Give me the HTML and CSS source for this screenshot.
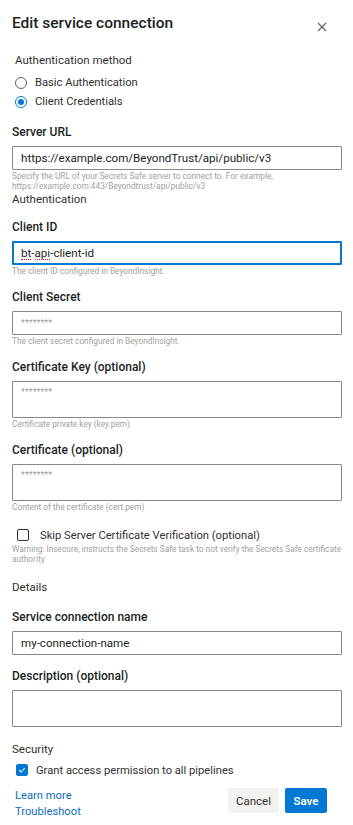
FILE: index.html
```html
<!DOCTYPE html>
<html>
<head>
<meta charset="utf-8">
<link rel="stylesheet" href="styles.css">
</head>
<body>
<div class="panel">
  <div class="header">
    <h1 class="title">Edit service connection</h1>
    <button class="close" aria-label="Close">
      <svg width="10" height="10" viewBox="0 0 10 10"><path d="M1 1L9 9M9 1L1 9" stroke="#605e5c" stroke-width="1.1" fill="none"/></svg>
    </button>
  </div>

  <div class="method">
    <div class="method-title">Authentication method</div>
    <label class="radio-row"><span class="radio"></span>Basic Authentication</label>
    <label class="radio-row"><span class="radio checked"></span>Client Credentials</label>
  </div>

  <div class="field first">
    <div class="label">Server URL</div>
    <div class="input">https://example.com/BeyondTrust/api/public/v3</div>
    <div class="help">Specify the URL of your Secrets Safe server to connect to. For example, https://example.com:443/Beyondtrust/api/public/v3</div>
  </div>

  <div class="section">Authentication</div>

  <div class="field after-section">
    <div class="label">Client ID</div>
    <div class="input focused"><span class="spell">bt</span>-<span class="spell">api</span>-client-id</div>
    <div class="help">The client ID configured in BeyondInsight.</div>
  </div>

  <div class="field">
    <div class="label">Client Secret</div>
    <div class="input placeholder">********</div>
    <div class="help">The client secret configured in BeyondInsight.</div>
  </div>

  <div class="field">
    <div class="label">Certificate Key (optional)</div>
    <div class="input area placeholder">********</div>
    <div class="help">Certificate private key (key.pem)</div>
  </div>

  <div class="field">
    <div class="label">Certificate (optional)</div>
    <div class="input area placeholder">********</div>
    <div class="help">Content of the certificate (cert.pem)</div>
  </div>

  <label class="check-row skip"><span class="checkbox"></span>Skip Server Certificate Verification (optional)</label>
  <div class="help warn">Warning: Insecure, instructs the Secrets Safe task to not verify the Secrets Safe certificate authority</div>

  <div class="section details">Details</div>

  <div class="field tight">
    <div class="label">Service connection name</div>
    <div class="input">my-connection-name</div>
  </div>

  <div class="field desc">
    <div class="label">Description (optional)</div>
    <div class="input area"></div>
  </div>

  <div class="section security">Security</div>
  <label class="check-row grant"><span class="checkbox on"><svg width="8" height="8" viewBox="0 0 8 8"><path d="M1.2 4.2L3.1 6L6.8 2" stroke="#fff" stroke-width="1.1" fill="none"/></svg></span>Grant access permission to all pipelines</label>

  <div class="footer">
    <div class="links">
      <a class="link">Learn more</a>
      <a class="link">Troubleshoot</a>
    </div>
    <div class="buttons">
      <button class="btn cancel">Cancel</button>
      <button class="btn save">Save</button>
    </div>
  </div>
</div>
</body>
</html>
```

FILE: styles.css
```css
* { box-sizing: border-box; }
html, body { margin: 0; padding: 0; background: #fff; }
body {
  font-family: Roboto, "Noto Sans", sans-serif;
  color: #323130;
  font-size: 12px;
}
.panel { padding: 10px 11px 0 12px; width: 353px; }
.header { display: flex; justify-content: space-between; align-items: center; height: 26px; }
.title { margin: 0; font-size: 15.5px; font-weight: 500; color: #201f1e; }
.close { border: 0; background: none; padding: 0; margin: 8px 14px 0 0; width: 12px; height: 12px; display: flex; align-items: center; justify-content: center; }

.method { margin-top: 16px; padding-left: 3px; }
.method-title { font-size: 11.5px; line-height: 16px; }
.radio-row { display: flex; align-items: center; height: 19px; font-size: 11.2px; color: #323130; }
.radio-row:first-of-type { margin-top: 5px; }
.radio { width: 12px; height: 12px; border-radius: 50%; border: 1px solid #605e5c; margin: 0 8px 0 0; position: relative; }
.radio.checked { border-color: #0078d4; }
.radio.checked::after { content: ""; position: absolute; left: 2px; top: 2px; width: 6px; height: 6px; border-radius: 50%; background: #0078d4; }

.field { margin-top: 12px; }
.field.first { margin-top: 12px; }
.field.after-section { margin-top: 11px; }
.label { font-size: 12px; font-weight: 500; line-height: 18px; color: #201f1e; }
.input {
  margin-top: 5px;
  height: 24px;
  width: 330px;
  border: 1px solid #8a8886;
  border-radius: 1px;
  padding: 0 8px;
  font-size: 11.6px;
  line-height: 22px;
  color: #201f1e;
}
.input.focused { border: 2px solid #0078d4; padding: 0 7px; line-height: 20px; }
.input.area { height: 37px; line-height: 20px; }
.input.placeholder { color: #a19f9d; font-size: 9px; }
.spell { border-bottom: 1px dotted #e81123; line-height: 12px; display: inline-block; }
.help { font-size: 8.3px; line-height: 10px; color: #a19f9d; margin-top: 1px; }
.section { font-size: 11.5px; line-height: 16px; margin-top: 0; }

.check-row { display: flex; align-items: center; font-size: 11.2px; }
.checkbox { width: 12px; height: 12px; border: 1px solid #323130; border-radius: 2px; display: flex; align-items: center; justify-content: center; }
.skip { margin-top: 15px; height: 16px; padding-left: 5px; }
.skip .checkbox { margin-right: 11px; }
.help.warn { margin-top: 2px; line-height: 9.5px; }
.details { margin-top: 15px; }
.field.tight { margin-top: 13px; }
.field.desc { margin-top: 12px; }
.security { margin-top: 14px; }
.grant { margin-top: 5px; height: 16px; padding-left: 4px; }
.grant .checkbox { background: #0078d4; border-color: #0078d4; margin-right: 8px; }

.footer { display: flex; justify-content: space-between; margin-top: 10px; }
.links { display: flex; flex-direction: column; padding-left: 3px; }
.link { color: #106ebe; font-size: 11.2px; line-height: 16px; }
.buttons { display: flex; gap: 6px; margin-top: 0; margin-right: 15px; }
.btn { height: 25px; border: 0; border-radius: 2px; font-family: inherit; font-size: 11.5px; padding: 0; }
.cancel { width: 51px; background: #f3f2f1; color: #323130; }
.save { width: 42px; background: #0078d4; color: #fff; font-weight: 600; }
```
